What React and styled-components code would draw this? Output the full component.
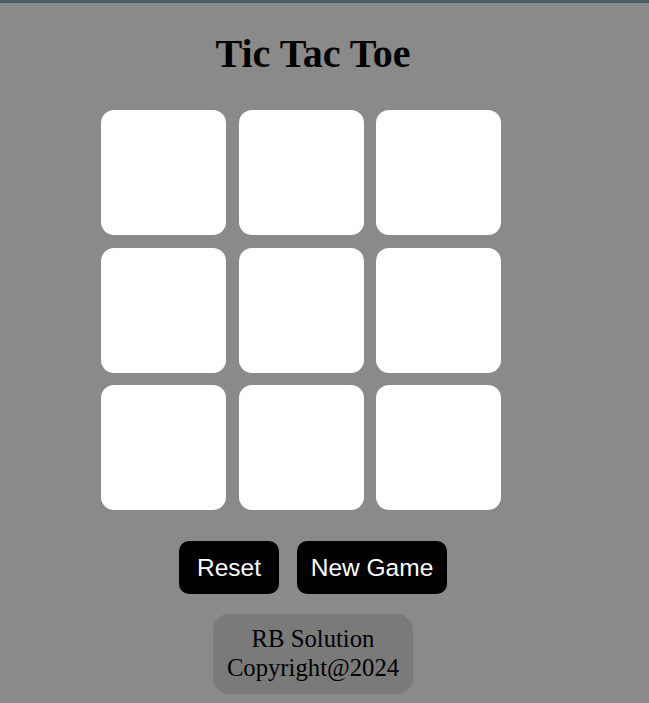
import React, { useState } from 'react';
import styled, { createGlobalStyle } from 'styled-components';

const GlobalStyle = createGlobalStyle`
  html, body {
    margin: 0;
    padding: 0;
    background-color: #898a89;
  }
  body {
    border-top: 3px solid #4b5c66;
    font-family: "Liberation Serif", "Times New Roman", serif;
  }
`

const Page = styled.main`
  width: 626px;
  display: flex;
  flex-direction: column;
  align-items: center;
`

const Title = styled.h1`
  margin: 28px 0 0;
  font-size: 40px;
  line-height: 46px;
  font-weight: bold;
  color: #000;
`

const Board = styled.div`
  margin: 33px 24px 0 0;
  display: grid;
  grid-template-columns: repeat(3, 125px);
  grid-auto-rows: 125px;
  gap: 12.5px;
`

const Cell = styled.button`
  border: none;
  border-radius: 13px;
  background-color: #fff;
  font-family: "Liberation Sans", Arial, sans-serif;
  font-size: 64px;
  color: #b0413e;
  cursor: pointer;
  padding: 0;
`

const Controls = styled.div`
  margin-top: 31px;
  display: flex;
  gap: 18px;
`

const Button = styled.button`
  width: ${p => p.$width}px;
  height: 53px;
  padding: 0;
  border: none;
  border-radius: 10px;
  background-color: #000;
  color: #fff;
  font-family: "Liberation Sans", Arial, sans-serif;
  font-size: 24.5px;
  cursor: pointer;
`

const Footer = styled.footer`
  margin-top: 20px;
  width: 200px;
  height: 80px;
  box-sizing: border-box;
  padding-top: 10px;
  border-radius: 16px;
  background-color: #797a79;
  text-align: center;
  font-size: 24.7px;
  line-height: 29px;
  color: #000;
`

export default function App() {
  const [cells, setCells] = useState(Array(9).fill(''));
  const [turnO, setTurnO] = useState(true);

  const play = (i) => {
    if (cells[i]) return;
    const next = cells.slice();
    next[i] = turnO ? 'O' : 'X';
    setCells(next);
    setTurnO(!turnO);
  };

  const reset = () => {
    setCells(Array(9).fill(''));
    setTurnO(true);
  };

  return (
    <>
      <GlobalStyle />
      <Page>
        <Title>Tic Tac Toe</Title>
        <Board>
          {cells.map((c, i) => (
            <Cell key={i} onClick={() => play(i)}>{c}</Cell>
          ))}
        </Board>
        <Controls>
          <Button $width={100} onClick={reset}>Reset</Button>
          <Button $width={150} onClick={reset}>New Game</Button>
        </Controls>
        <Footer>
          RB Solution<br />
          Copyright@2024
        </Footer>
      </Page>
    </>
  );
}
